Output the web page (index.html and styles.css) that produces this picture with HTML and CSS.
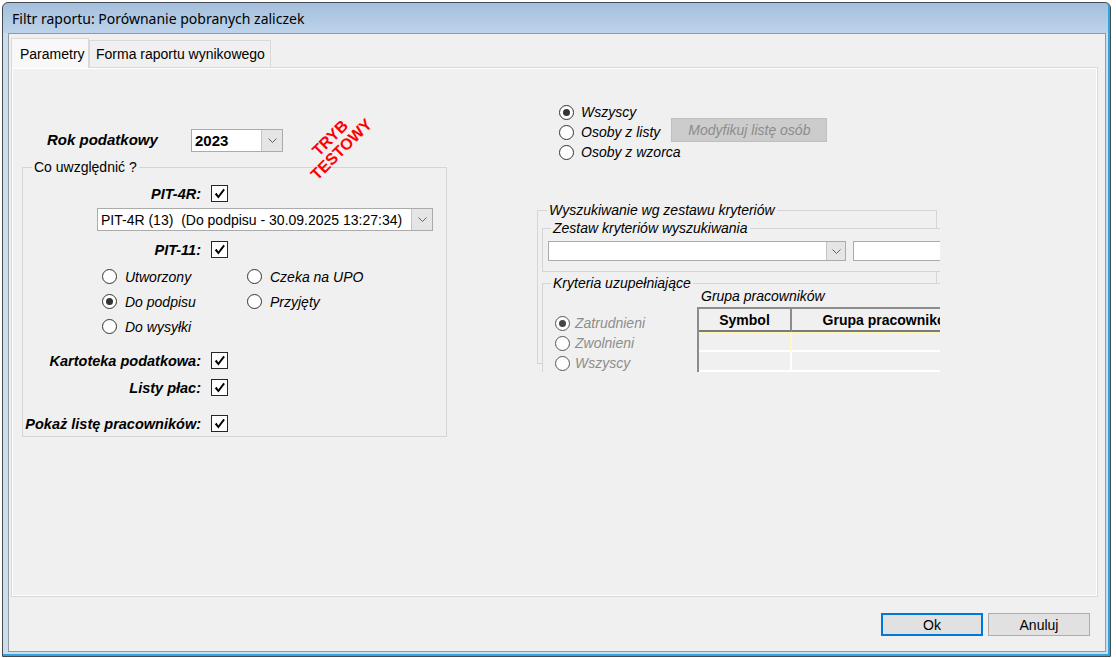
FILE: index.html
```html
<!DOCTYPE html>
<html lang="pl">
<head>
    <meta charset="UTF-8">
    <title>Filtr raportu</title>
    <link rel="stylesheet" href="styles.css">
</head>
<body>
    <div class="window">
        <div class="titlebar">Filtr raportu: Porównanie pobranych zaliczek</div>
        <div class="client">
            <div class="tabs">
                <div class="tab active">Parametry</div>
                <div class="tab">Forma raportu wynikowego</div>
            </div>

            <div class="panel">
                <div class="stamp">TRYB<br>TESTOWY</div>

                <div class="col-left">
                    <div class="year-row">
                        <span class="year-label">Rok podatkowy</span>
                        <div class="combo combo-year">
                            <span class="combo-text">2023</span>
                            <span class="combo-btn"><svg width="9" height="5" viewBox="0 0 9 5"><polyline points="0.5,0.5 4.5,4.5 8.5,0.5" fill="none" stroke="#606060"/></svg></span>
                        </div>
                    </div>

                    <fieldset class="group include">
                        <legend>Co uwzględnić ?</legend>

                        <div class="check-row first">
                            <span class="check-label">PIT-4R:</span>
                            <span class="check"><svg width="15" height="15" viewBox="0 0 15 15"><path d="M2.8 8.2 L4.6 6.8 L6.3 9.6 L11.4 2.8 L12.9 3.9 L6.4 12.6 Z"/></svg></span>
                        </div>
                        <div class="combo combo-pit">
                            <span class="combo-text">PIT-4R (13)&nbsp; (Do podpisu - 30.09.2025 13:27:34)</span>
                            <span class="combo-btn"><svg width="9" height="5" viewBox="0 0 9 5"><polyline points="0.5,0.5 4.5,4.5 8.5,0.5" fill="none" stroke="#606060"/></svg></span>
                        </div>
                        <div class="check-row pit11">
                            <span class="check-label">PIT-11:</span>
                            <span class="check"><svg width="15" height="15" viewBox="0 0 15 15"><path d="M2.8 8.2 L4.6 6.8 L6.3 9.6 L11.4 2.8 L12.9 3.9 L6.4 12.6 Z"/></svg></span>
                        </div>

                        <div class="status-grid">
                            <label class="opt"><span class="radio"></span>Utworzony</label>
                            <label class="opt"><span class="radio"></span>Czeka na UPO</label>
                            <label class="opt"><span class="radio on"></span>Do podpisu</label>
                            <label class="opt"><span class="radio"></span>Przyjęty</label>
                            <label class="opt"><span class="radio"></span>Do wysyłki</label>
                        </div>

                        <div class="check-row card">
                            <span class="check-label">Kartoteka podatkowa:</span>
                            <span class="check"><svg width="15" height="15" viewBox="0 0 15 15"><path d="M2.8 8.2 L4.6 6.8 L6.3 9.6 L11.4 2.8 L12.9 3.9 L6.4 12.6 Z"/></svg></span>
                        </div>
                        <div class="check-row payroll">
                            <span class="check-label">Listy płac:</span>
                            <span class="check"><svg width="15" height="15" viewBox="0 0 15 15"><path d="M2.8 8.2 L4.6 6.8 L6.3 9.6 L11.4 2.8 L12.9 3.9 L6.4 12.6 Z"/></svg></span>
                        </div>
                        <div class="check-row staff">
                            <span class="check-label">Pokaż listę pracowników:</span>
                            <span class="check"><svg width="15" height="15" viewBox="0 0 15 15"><path d="M2.8 8.2 L4.6 6.8 L6.3 9.6 L11.4 2.8 L12.9 3.9 L6.4 12.6 Z"/></svg></span>
                        </div>
                    </fieldset>
                </div>

                <div class="col-right">
                    <div class="scope">
                        <label class="scope-row"><span class="radio on"></span>Wszyscy</label>
                        <label class="scope-row"><span class="radio"></span>Osoby z listy<button class="btn-list" disabled>Modyfikuj listę osób</button></label>
                        <label class="scope-row"><span class="radio"></span>Osoby z wzorca</label>
                    </div>

                    <div class="search-clip">
                        <fieldset class="group search">
                            <legend>Wyszukiwanie wg zestawu kryteriów</legend>

                            <fieldset class="group inner set">
                                <legend>Zestaw kryteriów wyszukiwania</legend>
                                <div class="set-row">
                                    <div class="combo combo-set">
                                        <span class="combo-text"></span>
                                        <span class="combo-btn"><svg width="9" height="5" viewBox="0 0 9 5"><polyline points="0.5,0.5 4.5,4.5 8.5,0.5" fill="none" stroke="#606060"/></svg></span>
                                    </div>
                                    <div class="textbox"></div>
                                </div>
                            </fieldset>

                            <fieldset class="group inner extra">
                                <legend>Kryteria uzupełniające</legend>
                                <div class="extra-body">
                                    <div class="extra-radios">
                                        <label class="dis-row"><span class="radio dis on"></span>Zatrudnieni</label>
                                        <label class="dis-row"><span class="radio dis"></span>Zwolnieni</label>
                                        <label class="dis-row"><span class="radio dis"></span>Wszyscy</label>
                                    </div>
                                    <div class="groups">
                                        <div class="groups-title">Grupa pracowników</div>
                                        <div class="grid">
                                            <div class="th th-sym">Symbol</div>
                                            <div class="th">Grupa pracowników</div>
                                            <div class="td td-sym top"></div>
                                            <div class="td top"></div>
                                            <div class="td td-sym"></div>
                                            <div class="td"></div>
                                        </div>
                                    </div>
                                </div>
                            </fieldset>
                        </fieldset>
                    </div>
                </div>
            </div>

            <div class="footer">
                <button class="btn btn-ok">Ok</button>
                <button class="btn">Anuluj</button>
            </div>
        </div>
    </div>
</body>
</html>
```

FILE: styles.css
```css
* {
    box-sizing: border-box;
}

body {
    margin: 0;
    background: #fff;
    font-family: "Liberation Sans", Arial, sans-serif;
    font-size: 14px;
    color: #000;
}

/* okno dialogu */
.window {
    margin: 2px 0 0 2px;
    width: 1109px;
    height: 655px;
    border: 1px solid #434a52;
    border-radius: 6px 6px 0 0;
    background: linear-gradient(#a4bfdd, #bdd3ea 30px, #cfdcea 30px);
    padding: 0 4px 4px 5px;
    display: flex;
    flex-direction: column;
    box-shadow: inset -2px -2px 0 #2ea6dd;
}

.titlebar {
    height: 30px;
    flex: none;
    display: flex;
    align-items: center;
    padding-left: 4px;
    font-family: "Noto Sans", sans-serif;
    font-size: 14px;
}

.client {
    flex: 1;
    background: #f0f0f0;
    border: 1px solid #8e9aa6;
    padding: 4px 7px 0 2px;
    display: flex;
    flex-direction: column;
}

/* zakladki */
.tabs {
    display: flex;
    align-items: flex-end;
    height: 29px;
    flex: none;
}

.tab {
    height: 27px;
    width: 182px;
    padding-left: 6px;
    border: 1px solid #d9d9d9;
    border-bottom: none;
    display: flex;
    align-items: center;
    background: #f0f0f0;
}

.tab.active {
    width: 78px;
    height: 30px;
    padding-left: 8px;
    margin-bottom: -1px;
    background: #f8f8f8;
    position: relative;
    z-index: 1;
}

.panel {
    flex: none;
    height: 530px;
    border: 1px solid #d9d9d9;
    box-shadow: inset 1px 1px 0 #fff, inset -1px -1px 0 #fff;
    display: flex;
    padding-left: 10px;
    position: relative;
}

.stamp {
    position: absolute;
    left: 279px;
    top: 60px;
    width: 90px;
    text-align: center;
    line-height: 16px;
    font-size: 16px;
    font-weight: bold;
    color: #ff0000;
    transform: rotate(-45deg);
}

/* ramki grup */
.group {
    margin: 0;
    padding: 0;
    min-width: 0;
    border: 1px solid #d5d5d5;
}

.group > legend {
    padding: 0 2px;
    margin-left: 9px;
    line-height: 16px;
}

/* lewa kolumna */
.col-left {
    width: 425px;
    flex: none;
}

.year-row {
    display: flex;
    align-items: center;
    margin-top: 61px;
    height: 23px;
}

.year-label {
    margin-left: 25px;
    width: 144px;
    font-size: 15px;
    font-weight: bold;
    font-style: italic;
    padding-bottom: 2px;
}

.combo {
    display: flex;
    height: 23px;
    border: 1px solid #ababab;
    background: #fff;
}

.combo-text {
    flex: 1;
    padding-left: 3px;
    display: flex;
    align-items: center;
    white-space: pre;
}

.combo-btn {
    width: 21px;
    background: #e5e5e5;
    border-left: 1px solid #c4c4c4;
    display: flex;
    align-items: center;
    justify-content: center;
}

.combo-year {
    width: 92px;
}

.combo-year .combo-text {
    font-size: 15px;
    font-weight: bold;
}

.include {
    width: 425px;
    margin-top: 7px;
    padding-bottom: 4px;
}

.check-row {
    display: grid;
    grid-template-columns: 178px 17px;
    column-gap: 10px;
    align-items: center;
    height: 17px;
}

.check-row.first { margin-top: 10px; }
.check-row.pit11 { margin-top: 10px; }
.check-row.card { margin-top: 13px; }
.check-row.payroll { margin-top: 10px; }
.check-row.staff { margin-top: 19px; }

.check-label {
    text-align: right;
    font-size: 14.5px;
    font-weight: bold;
    font-style: italic;
    white-space: nowrap;
}

.check {
    width: 17px;
    height: 17px;
    border: 1px solid #262626;
    background: #fff;
    display: flex;
}

.combo-pit {
    width: 336px;
    margin: 6px 0 0 74px;
}

.radio {
    width: 15px;
    height: 15px;
    flex: none;
    border: 1px solid #333;
    border-radius: 50%;
    background: #fff;
    display: flex;
    align-items: center;
    justify-content: center;
}

.radio.on::after {
    content: "";
    width: 7px;
    height: 7px;
    border-radius: 50%;
    background: #333;
}

.status-grid {
    display: grid;
    grid-template-columns: 145px auto;
    grid-auto-rows: 25px;
    margin: 6px 0 0 79px;
}

.opt {
    display: flex;
    align-items: center;
    gap: 8px;
    font-style: italic;
}

/* prawa kolumna */
.col-right {
    margin-left: 90px;
}

.scope {
    margin: 34px 0 0 22px;
}

.scope-row {
    display: flex;
    align-items: center;
    height: 20px;
    gap: 7px;
    font-style: italic;
}

.btn-list {
    width: 156px;
    height: 24px;
    margin: 0 0 4px 4px;
    background: #cccccc;
    border: 1px solid #bfbfbf;
    color: #8c8c8c;
    font-family: inherit;
    font-size: 14px;
    font-style: italic;
    padding: 0;
}

.search-clip {
    margin-top: 40px;
    width: 403px;
    height: 170px;
    overflow: hidden;
}

.search {
    width: 400px;
    height: 162px;
    font-style: italic;
}

.inner {
    width: 450px;
    margin-left: 4px;
    background: #f0f0f0;
}

.inner > legend {
    margin-left: 8px;
}

.set {
    margin-top: 2px;
    padding-bottom: 10px;
}

.set-row {
    display: flex;
    gap: 7px;
    margin: 5px 0 0 5px;
}

.combo-set {
    width: 298px;
    height: 20px;
    flex: none;
}

.combo-set .combo-btn {
    width: 19px;
}

.textbox {
    width: 200px;
    height: 20px;
    flex: none;
    border: 1px solid #ababab;
    background: #fff;
}

.extra {
    margin-top: 3px;
    height: 200px;
}

.extra-body {
    display: flex;
    align-items: flex-start;
}

.extra-radios {
    width: 130px;
    flex: none;
    margin: 22px 0 0 12px;
}

.dis-row {
    display: flex;
    align-items: center;
    gap: 5px;
    height: 20px;
    color: #8d8d8d;
}

.radio.dis {
    border-color: #555;
}

.radio.dis.on::after {
    background: #444;
}

.groups {
    flex: none;
    margin: -3px 0 0 12px;
}

.groups-title {
    line-height: 16px;
    padding-left: 4px;
}

.grid {
    display: grid;
    grid-template-columns: 93px 195px;
    margin-top: 3px;
    border-top: 2px solid #8c8c8c;
    border-left: 2px solid #8c8c8c;
    font-style: normal;
}

.th {
    height: 23px;
    border-bottom: 2px solid #7a7a7a;
    font-weight: bold;
    display: flex;
    align-items: center;
    justify-content: center;
    white-space: nowrap;
}

.th-sym {
    border-right: 2px solid #8c8c8c;
}

.td {
    height: 20px;
    border-bottom: 2px solid #fff;
}

.td-sym {
    border-right: 2px solid #fff;
}

.td.top {
    box-shadow: inset 0 1px 0 #fff6b8;
}

.td-sym.top {
    border-right-color: #fff8c8;
}

/* przyciski */
.footer {
    flex: 1;
    display: flex;
    justify-content: flex-end;
    align-items: flex-start;
    gap: 5px;
    padding: 16px 8px 0 0;
}

.btn {
    width: 102px;
    height: 23px;
    background: #e1e1e1;
    border: 1px solid #adadad;
    font-family: inherit;
    font-size: 14px;
    color: #000;
    padding: 0;
}

.btn-ok {
    border: 2px solid #0078d7;
}
```
